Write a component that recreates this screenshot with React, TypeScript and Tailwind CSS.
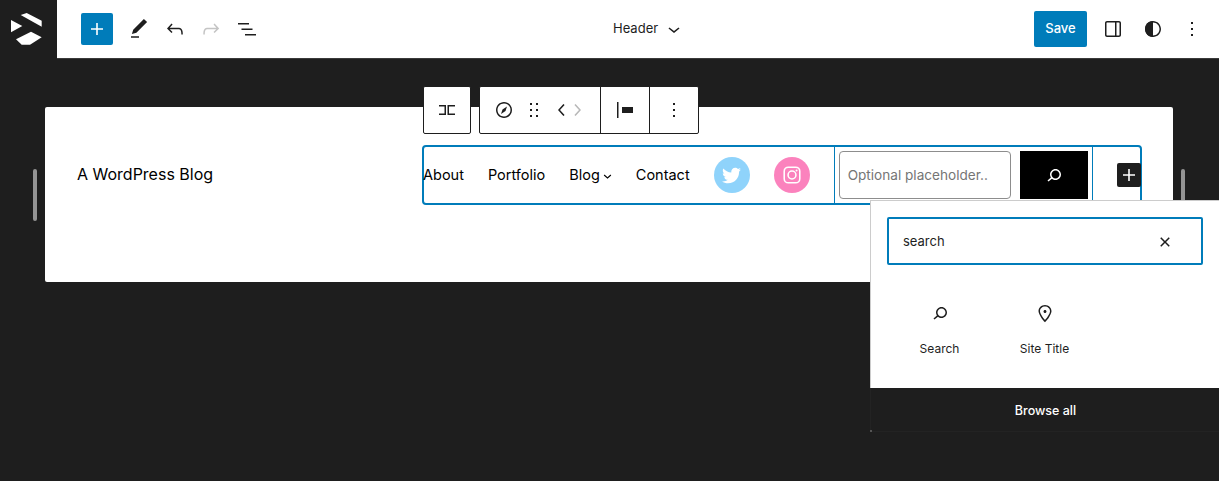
import React from "react";
import { FaTwitter } from "react-icons/fa";

const paths = {
  plus: "M18 11.2h-5.2V6h-1.6v5.2H6v1.6h5.2V18h1.6v-5.2H18z",
  edit: "M20.1 5.1L16.9 2 6.2 12.7l-1.3 4.4 4.5-1.3L20.1 5.1zM4 20.8h8v-1.5H4v1.5z",
  undo: "M18.3 11.7c-.6-.6-1.4-.9-2.3-.9H6.7l2.9-3.3-1.1-1-4.5 5L8.5 16l1-1-2.7-2.7H16c.5 0 .9.2 1.3.5 1 1 1 3.4 1 4.5v.3h1.5v-.2c0-1.5 0-4.3-1.5-5.7z",
  redo: "M15.6 6.5l-1.1 1 2.9 3.3H8c-.9 0-1.7.3-2.3.9-1.4 1.5-1.4 4.2-1.4 5.6v.2h1.5v-.3c0-1.1 0-3.5 1-4.5.3-.3.7-.5 1.3-.5h9.2L14.5 15l1.1 1.1 4.6-4.6-4.6-5z",
  list: "M3 6h11v1.5H3V6zm3.5 5.5h11V13h-11v-1.5zM21 17H10v1.5h11V17z",
  chevronDown: "M17.5 11.6L12 16l-5.5-4.4.9-1.2L12 14l4.5-3.6 1 1.2z",
  sidebar:
    "M18 4H6c-1.1 0-2 .9-2 2v12c0 1.1.9 2 2 2h12c1.1 0 2-.9 2-2V6c0-1.1-.9-2-2-2zm-4 14.5H6c-.3 0-.5-.2-.5-.5V6c0-.3.2-.5.5-.5h8v13zm4.5-.5c0 .3-.2.5-.5.5h-2.5v-13H18c.3 0 .5.2.5.5v12z",
  ring: "M12 4c-4.4 0-8 3.6-8 8s3.6 8 8 8 8-3.6 8-8-3.6-8-8-8zm0 14.5c-3.6 0-6.5-2.9-6.5-6.5S8.4 5.5 12 5.5s6.5 2.9 6.5 6.5-2.9 6.5-6.5 6.5z",
  half: "M12 4a8 8 0 0 0 0 16z",
  more: "M13 19h-2v-2h2v2zm0-6h-2v-2h2v2zm0-6h-2V5h2v2z",
  compass:
    "M12 4c-4.4 0-8 3.6-8 8s3.6 8 8 8 8-3.6 8-8-3.6-8-8-8zm0 14.5c-3.6 0-6.5-2.9-6.5-6.5S8.4 5.5 12 5.5s6.5 2.9 6.5 6.5-2.9 6.5-6.5 6.5zM9 16l4.5-3L15 8.4l-4.5 3L9 16z",
  drag: "M8 7h2V5H8v2zm0 6h2v-2H8v2zm0 6h2v-2H8v2zm6-14v2h2V5h-2zm0 8h2v-2h-2v2zm0 6h2v-2h-2v2z",
  chevronLeft: "M14.6 7l-1.2-1L8 12l5.4 6 1.2-1-4.6-5z",
  chevronRight: "M10.6 6L9.4 7l4.6 5-4.6 5 1.2 1 5.4-6z",
  justifyLeft: "M9 9v6h11V9H9zM4 20h1.5V4H4v16z",
  search:
    "M13.5 6C10.5 6 8 8.5 8 11.5c0 1.1.3 2.1.9 3l-3.4 3 1 1.1 3.4-2.9c1 .9 2.2 1.4 3.6 1.4 3 0 5.5-2.5 5.5-5.5C19 8.5 16.5 6 13.5 6zm0 9.5c-2.2 0-4-1.8-4-4s1.8-4 4-4 4 1.8 4 4-1.8 4-4 4z",
  marker:
    "M12 9c-.8 0-1.5.7-1.5 1.5S11.2 12 12 12s1.5-.7 1.5-1.5S12.8 9 12 9zm0-5c-3.6 0-6.5 2.8-6.5 6.2 0 .8.3 1.8.9 3.1.5 1.1 1.2 2.3 2 3.6.7 1 3 3.8 3.2 3.9l.4.5.4-.5c.2-.2 2.6-2.9 3.2-3.9.8-1.2 1.5-2.5 2-3.6.6-1.3.9-2.3.9-3.1C18.5 6.8 15.6 4 12 4zm4.3 8.7c-.5 1-1.1 2.2-1.9 3.4-.5.7-1.7 2.2-2.4 3-.7-.8-1.9-2.3-2.4-3-.8-1.2-1.4-2.3-1.9-3.3-.6-1.4-.7-2.2-.7-2.5 0-2.6 2.2-4.7 5-4.7s5 2.1 5 4.7c0 .2-.1 1-.6 2.4z",
  close:
    "M12 13.06l3.712 3.713 1.061-1.06L13.061 12l3.712-3.712-1.06-1.06L12 10.938 8.288 7.227l-1.061 1.06L10.939 12l-3.712 3.712 1.06 1.061L12 13.061z",
  templatePart: "M4 7h7v10H4v-1.5h5.5v-7H4zM20 7h-7.5v10H20v-1.5h-6v-7h6z",
};

const Icon = ({ d, className = "" }: { d: string; className?: string }) => (
  <svg viewBox="0 0 24 24" className={`w-6 h-6 fill-current shrink-0 ${className}`}>
    <path d={d} fillRule="evenodd" />
  </svg>
);

const TopButton = ({ d, muted }: { d: string; muted?: boolean }) => (
  <div className={`w-9 h-9 flex items-center justify-center ${muted ? "text-[#c4c4c4]" : "text-[#1e1e1e]"}`}>
    <Icon d={d} />
  </div>
);

const navItems = ["About", "Portfolio"];

export default function App() {
  return (
    <div className="w-screen h-screen overflow-hidden bg-[#1e1e1e] flex flex-col relative font-['Inter',sans-serif] text-[13px] text-[#1e1e1e]">
      {/* Header */}
      <header className="h-[59px] shrink-0 flex">
        <div className="w-[57px] h-[58px] bg-[#1e1e1e] flex items-center justify-center shrink-0">
          <svg viewBox="0 0 57 58" className="w-[57px] h-[58px] fill-white">
            <polygon points="20.7,15 26.7,13 41.7,20.7 41.7,26.7" />
            <polygon points="11,20 11,32.3 22.3,26" />
            <polygon points="16,39.3 31,31.7 41.7,37.3 30,44.7 21.7,44.7" />
          </svg>
        </div>
        <div className="flex-1 bg-white border-b border-[#3a3a3a] flex items-center pr-[9px]">
          <div className="w-8 h-8 ml-6 mr-2 rounded-[2px] bg-[#007cba] text-white flex items-center justify-center">
            <Icon d={paths.plus} />
          </div>
          <TopButton d={paths.edit} />
          <TopButton d={paths.undo} />
          <TopButton d={paths.redo} muted />
          <TopButton d={paths.list} />
          <div className="ml-[348px] flex items-center">
            <span>Header</span>
            <Icon d={paths.chevronDown} className="ml-[4px]" />
          </div>
          <div className="ml-auto flex items-center">
            <button className="w-[53px] h-9 mr-2 rounded-[2px] bg-[#007cba] text-white font-medium text-[13px]">Save</button>
            <div className="w-9 h-9 flex items-center justify-center">
              <Icon d={paths.sidebar} />
            </div>
            <div className="w-9 h-9 ml-1 flex items-center justify-center relative">
              <Icon d={paths.ring} />
              <Icon d={paths.half} className="absolute left-[6px] top-[6px]" />
            </div>
            <div className="w-9 h-9 ml-[3px] flex items-center justify-center">
              <Icon d={paths.more} />
            </div>
          </div>
        </div>
      </header>

      {/* Canvas */}
      <main className="flex-1 flex items-start gap-2 pl-[33px] pr-[34px] pt-[48px]">
        <div className="w-1 h-[52px] mt-[62px] rounded-full bg-[#949494] shrink-0" />
        <div className="relative flex-1 h-[175px] bg-white rounded-[2px] pt-[38px] pl-[32px] pr-[31px] flex items-start justify-between text-black">
          <div className="h-[60px] pb-[2px] flex items-center text-[16px]">A WordPress Blog</div>

          {/* Nav block */}
          <div className="w-[720px] h-[60px] border-2 border-[#007cba] rounded-[4px] flex items-center text-[14.5px]">
            <div className="flex items-center gap-6 -ml-px">
              {navItems.map((item) => (
                <span key={item}>{item}</span>
              ))}
              <span className="flex items-center">
                Blog
                <svg viewBox="0 0 12 12" className="w-[9px] h-[9px] ml-[3px] mt-[3px] stroke-black fill-none">
                  <path d="M1.5 4l4.5 4 4.5-4" strokeWidth="1.5" />
                </svg>
              </span>
              <span>Contact</span>
              <span className="w-9 h-9 rounded-full bg-[#8fd3fb] flex items-center justify-center text-white">
                <FaTwitter className="w-[19px] h-[19px]" />
              </span>
              <span className="w-9 h-9 rounded-full bg-[#fb82bd] flex items-center justify-center">
                <svg viewBox="0 0 24 24" className="w-[22px] h-[22px] fill-none stroke-white" strokeWidth="1.7">
                  <rect x="3.5" y="3.5" width="17" height="17" rx="4.5" />
                  <circle cx="12" cy="12" r="4.3" />
                  <circle cx="17" cy="7" r="1.1" className="fill-white stroke-none" />
                </svg>
              </span>
            </div>
            <div className="ml-6 h-full w-[259px] shrink-0 border-x border-[#007cba] pl-1 pr-1 flex items-center">
              <div className="w-[172px] h-12 border border-[#8d8d8d] rounded-[4px] pl-2 flex items-center text-[#757575] text-[13.6px] whitespace-nowrap">
                Optional placeholder..
              </div>
              <div className="w-[68px] h-12 ml-[9px] bg-black text-white flex items-center justify-center">
                <Icon d={paths.search} />
              </div>
            </div>
            <div className="ml-auto -mr-px w-6 h-6 rounded-[2px] bg-[#1e1e1e] text-white flex items-center justify-center">
              <Icon d={paths.plus} />
            </div>
          </div>

          {/* Block toolbar */}
          <div className="absolute left-[378px] top-[-21px] flex items-start gap-2 text-[#1e1e1e]">
            <div className="w-12 h-12 bg-white border border-[#1e1e1e] rounded-[2px] flex items-center justify-center">
              <Icon d={paths.templatePart} />
            </div>
            <div className="h-12 w-[220px] bg-white border border-[#1e1e1e] rounded-[2px] flex items-center">
              <div className="w-[121px] h-full flex items-center border-r border-[#1e1e1e]">
                <div className="w-12 flex justify-center">
                  <Icon d={paths.compass} />
                </div>
                <Icon d={paths.drag} className="-ml-[6px]" />
                <Icon d={paths.chevronLeft} className="ml-[4px]" />
                <Icon d={paths.chevronRight} className="-ml-[9px] text-[#b8b8b8]" />
              </div>
              <div className="w-[49px] h-full flex items-center justify-center border-r border-[#1e1e1e]">
                <Icon d={paths.justifyLeft} />
              </div>
              <div className="flex-1 flex items-center justify-center">
                <Icon d={paths.more} />
              </div>
            </div>
          </div>
        </div>
        <div className="w-1 h-[52px] mt-[62px] rounded-full bg-[#949494] shrink-0" />
      </main>

      {/* Inserter popover */}
      <div className="absolute left-[870px] top-[200px] w-[350px] flex flex-col">
        <div className="h-[188px] bg-white border border-b-0 border-[#cccccc] p-4">
          <div className="h-12 w-[316px] border-2 border-[#007cba] rounded-[2px] pl-[14px] pr-[24px] pt-px flex items-center justify-between text-[#1e1e1e]">
            <span>search</span>
            <Icon d={paths.close} />
          </div>
          <div className="flex mt-[36px] text-[12px] text-[#1e1e1e]">
            {[
              { label: "Search", d: paths.search },
              { label: "Site Title", d: paths.marker },
            ].map((item) => (
              <div key={item.label} className="w-[105px] flex flex-col items-center gap-[16px]">
                <Icon d={item.d} />
                <span className="leading-[16px]">{item.label}</span>
              </div>
            ))}
          </div>
        </div>
        <div className="relative h-[44px] pt-[3px] bg-[#1e1e1e] border-l border-b border-[#232323] text-white text-[12.5px] font-medium flex items-center justify-center">
          Browse all
          <span className="absolute left-[-1px] bottom-[-1px] w-[2px] h-[2px] bg-[#555555]" />
        </div>
      </div>
    </div>
  );
}
